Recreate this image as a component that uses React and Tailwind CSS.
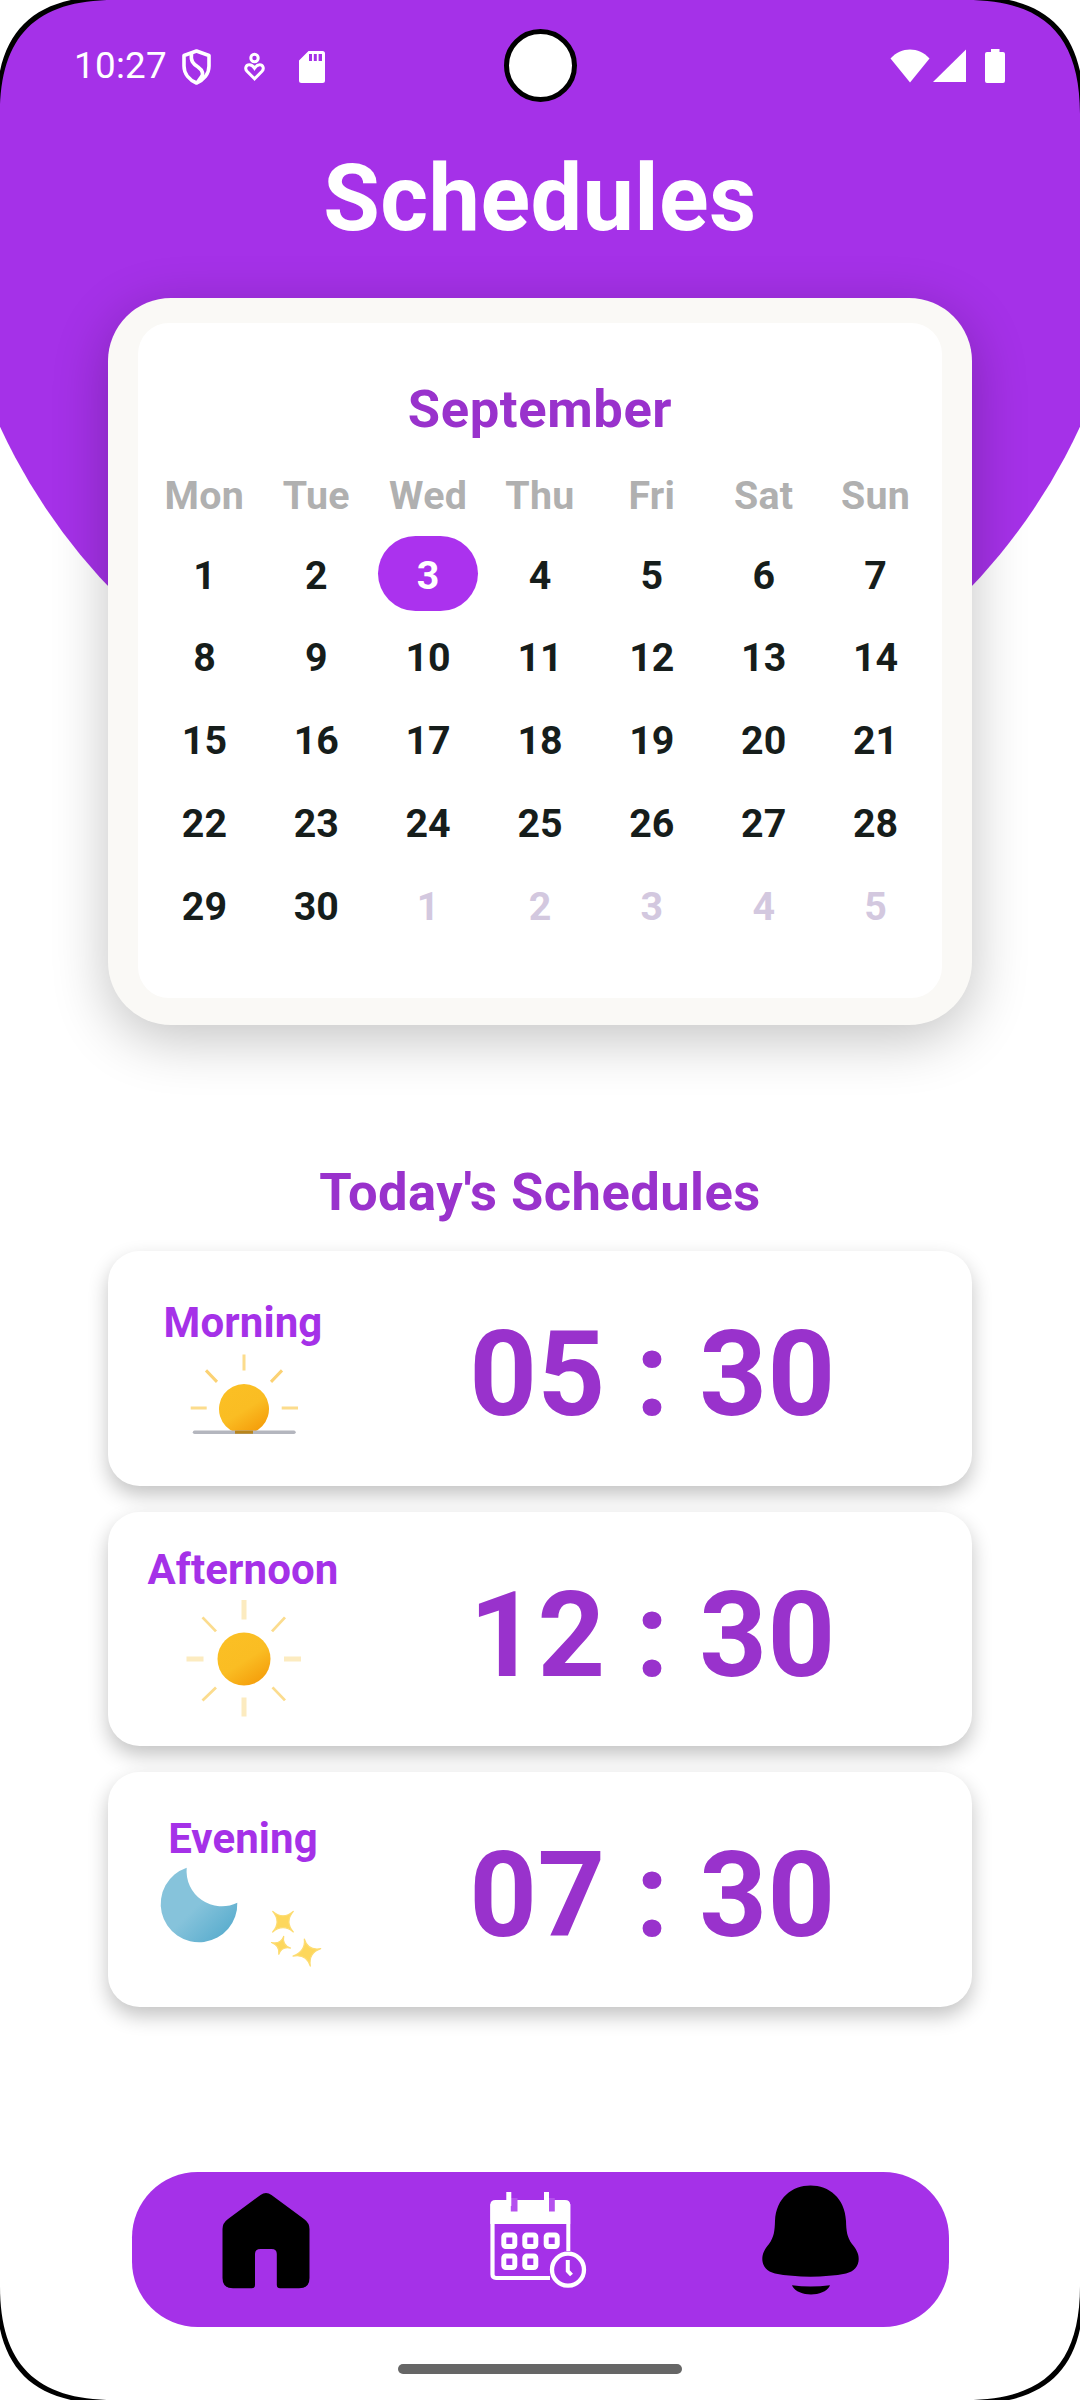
const WEEKDAYS = ["Mon", "Tue", "Wed", "Thu", "Fri", "Sat", "Sun"];
const DAYS = Array.from({ length: 35 }, (_, i) => ({
  label: i < 30 ? i + 1 : i - 29,
  outside: i >= 30,
  selected: i === 2,
}));

function StatusBar() {
  return (
    <div className="relative flex h-[132px] items-center text-white">
      <span className="ml-[74px] w-[108px] pt-[1px] text-[36.75px] leading-none tracking-[0.3px]">10:27</span>
      <svg className="mt-[2px]" width="29" height="36" viewBox="0 0 29 36" fill="none" stroke="#fff" strokeWidth="3.6" strokeLinejoin="round">
        <path d="M14.5 2 L27 6.5 V17 C27 25 21.5 31 14.5 34 C7.500 31 2 25 2 17 V6.500 Z" />
        <path d="M9.500 4.500 C8.500 12 11 15 16 18 C21 21.500 22 25 19.500 30" />
        <path d="M21 26 L16 33" strokeWidth="4" />
      </svg>
      <svg className="ml-[33px] mt-[2px]" width="21" height="30" viewBox="0 0 21 30" fill="none" stroke="#fff" strokeWidth="3">
        <circle cx="10.500" cy="6" r="3.700" />
        <path d="M10.500 26.800 L3 19.300 C0.500 16.500 2 12.800 5.300 12.800 C7.500 12.800 9 14 10.500 16.300 C12 14 13.500 12.800 15.700 12.800 C19 12.800 20.500 16.500 18 19.300 Z" />
      </svg>
      <svg className="ml-[34px] mt-[2px]" width="26" height="32" viewBox="0 0 26 32">
        <path fill="#fff" fillRule="evenodd" d="M9.500 0 H23.500 Q26 0 26 2.500 V29.500 Q26 32 23.500 32 H2.500 Q0 32 0 29.500 V9.500 Z M10 3 V10 H13 V3 Z M14.800 3 V10 H17.800 V3 Z M19.600 3 V10 H23 V3 Z" />
      </svg>
      <div className="ml-auto mr-[75px] flex items-center">
        <svg width="40" height="34" viewBox="0 0 40 34">
          <path fill="#fff" d="M20 33.500 L0.500 9.500 C11 -2.500 29 -2.500 39.500 9.500 Z" />
        </svg>
        <svg className="ml-[3px]" width="33" height="34" viewBox="0 0 33 34">
          <path fill="#fff" d="M33 0.500 V33 H0 Z" />
        </svg>
        <svg className="ml-[19px]" width="20" height="34" viewBox="0 0 20 34">
          <path fill="#fff" d="M6 0 H14.500 V3 H18 Q20 3 20 5 V32 Q20 34 18 34 H2 Q0 34 0 32 V5 Q0 3 2 3 H6 Z" />
        </svg>
      </div>
    </div>
  );
}

function Calendar() {
  return (
    <section className="relative mx-[108px] mt-[33px] h-[727px] rounded-[63px] bg-[#faf9f6] px-[30px] pt-[25px] pb-[27px] shadow-[0_14px_56px_rgba(0,0,0,0.24)]">
      <div className="h-full rounded-[31px] bg-white px-[10.500px] pt-[55px]">
        <h2 className="text-center text-[52.5px] leading-[62px] font-bold tracking-[0.6px] text-[#9932cc]">September</h2>
        <div className="mt-[32.5px] grid grid-cols-7 text-center text-[39.375px] leading-[46px] font-bold tracking-[0.3px] text-[#b0b0b0]">
          {WEEKDAYS.map((d) => (
            <span key={d}>{d}</span>
          ))}
        </div>
        <div className="mt-[13.5px] grid auto-rows-[82.75px] grid-cols-7 items-center justify-items-center text-[39.375px] font-bold">
          {DAYS.map((d, i) => (
            <span
              key={i}
              className={
                "flex h-[75px] w-[100px] items-center justify-center rounded-full pt-[4px] leading-none " +
                (d.selected ? "bg-[#ab32ee] text-white" : d.outside ? "text-[#d3c8df]" : "text-[#161d1b]")
              }
            >
              {d.label}
            </span>
          ))}
        </div>
      </div>
    </section>
  );
}

function SunGradient({ id }) {
  return (
    <linearGradient id={id} x1="0.250" y1="0.100" x2="0.800" y2="0.950">
      <stop offset="0" stopColor="#fbbf24" />
      <stop offset="0.500" stopColor="#fabd23" />
      <stop offset="1" stopColor="#f59e0b" />
    </linearGradient>
  );
}

function Sunrise() {
  return (
    <svg className="-mt-[1px]" width="140" height="96" viewBox="0 0 140 96">
      <defs>
        <SunGradient id="sunrise" />
      </defs>
      <path fill="url(#sunrise)" d="M62.500 85.500 A25 25 0 1 1 79.500 85.500 Z" />
      <path d="M71 7.400 V23.400 M17.700 60.900 H33.700 M108.700 60.900 H125" stroke="#fcdc8c" strokeWidth="3" />
      <path d="M33 23.400 L44 34.900 M109 23.400 L98 34.900" stroke="#fbd274" strokeWidth="3" />
      <path d="M21.500 85.200 H121" stroke="#b4b6be" strokeWidth="3.400" strokeLinecap="round" />
      <path d="M62 85.200 H80" stroke="#b8851c" strokeWidth="3" />
    </svg>
  );
}

function Sun() {
  return (
    <svg className="-mt-[1px]" width="140" height="128" viewBox="0 0 140 128">
      <defs>
        <SunGradient id="midday" />
      </defs>
      <circle cx="71" cy="65" r="26.500" fill="url(#midday)" />
      <path d="M71 5.900 V25.400 M71 103.400 V122.400 M13.500 65 H30.500 M111 65 H128" stroke="#fcebc0" strokeWidth="5" />
      <path d="M29.500 23.400 L43 37.400 M112 23.400 L99 37.400 M43 93.400 L29.500 106.400 M99.500 93.400 L112 106.400" stroke="#fbdc8e" strokeWidth="2.800" />
    </svg>
  );
}

/* Four-pointed star: tips joined by curves that bend in towards the centre. */
function Star({ cx, cy, tips }) {
  const d = tips
    .map(([x, y], i) => {
      const [nx, ny] = tips[(i + 1) % tips.length];
      const qx = cx + ((x + nx) / 2 - cx) * 0.15;
      const qy = cy + ((y + ny) / 2 - cy) * 0.15;
      return `${i === 0 ? `M${x} ${y}` : ""} Q${qx} ${qy} ${nx} ${ny}`;
    })
    .join(" ");
  return <path d={`${d} Z`} fill="#fdd75c" stroke="#fddc72" strokeWidth="1.200" strokeLinejoin="round" />;
}

function Moon() {
  return (
    <svg className="-mt-[1.5px]" width="200" height="112" viewBox="0 0 200 112">
      <defs>
        <linearGradient id="moon" x1="0.200" y1="0.200" x2="0.850" y2="0.850">
          <stop offset="0" stopColor="#86c3db" />
          <stop offset="0.450" stopColor="#86c3db" />
          <stop offset="1" stopColor="#5eafcf" />
        </linearGradient>
      </defs>
      <path fill="url(#moon)" d="M43.700 4.700 A35.300 35.300 0 0 0 94.300 39.700 A38.300 38.300 0 1 1 43.700 4.700 Z" />
      <Star cx={140} cy={58.7} tips={[[129.7, 48.4], [150.3, 48.4], [150.3, 69], [129.7, 69]]} />
      <Star cx={138} cy={82.4} tips={[[140.7, 73.4], [147.5, 85.1], [135.8, 91.3], [128.5, 79.5]]} />
      <Star cx={164} cy={89.1} tips={[[161.3, 76], [177.7, 85.7], [167.3, 103.1], [150, 93.1]]} />
    </svg>
  );
}

const SLOTS = [
  { name: "Morning", time: "05 : 30", Icon: Sunrise, pad: "pt-[47px]" },
  { name: "Afternoon", time: "12 : 30", Icon: Sun, pad: "pt-[33px]" },
  { name: "Evening", time: "07 : 30", Icon: Moon, pad: "pt-[42px]" },
];

function ScheduleCard({ name, time, Icon, pad }) {
  return (
    <article className="relative flex h-[234.5px] rounded-[31.500px] bg-white shadow-[0_9px_20px_rgba(0,0,0,0.24)]">
      <div className={"flex w-[270px] flex-col items-center " + pad}>
        <h3 className="text-[42px] leading-[50px] font-bold tracking-[0.1px] text-[#a531e8]">{name}</h3>
        <Icon />
      </div>
      <p className="flex-1 pt-[54px] pr-[45px] text-center text-[118.125px] leading-[140px] font-bold tracking-[0.5px] text-[#9932cc]">{time}</p>
    </article>
  );
}

function HomeIcon() {
  return (
    <svg width="112" height="112" viewBox="0 0 112 112">
      <path d="M49.500 11 Q55 7 60.500 11 L93 35 Q98.500 39 98.500 45 V94 Q98.500 104.300 88 104.300 H69 Q65.800 104.300 65.800 101 V70 Q65.800 65 60.500 65 H49.500 Q44 65 44 70 V101 Q44 104.300 41 104.300 H22 Q11.500 104.300 11.500 94 V45 Q11.500 39 17 35 Z" />
    </svg>
  );
}

function CalendarClockIcon() {
  return (
    <svg width="112" height="112" viewBox="0 0 112 112" fill="none" stroke="#fff">
      <path d="M67 94 H13 Q9.500 94 9.500 90.500 V20" strokeWidth="4.200" />
      <path d="M85.300 20 V67" strokeWidth="4" />
      <path d="M7.300 40 V21 Q7.300 16 12.500 16 H82 Q87.200 16 87.200 21 V40 Z" fill="#fff" stroke="none" />
      <path d="M27.800 14 H34.500 V27.500 H27.800 Z M66 14 H71.800 V27.500 H66 Z" fill="#b550ee" stroke="none" />
      <path d="M25.800 8 V22 M63.500 8 V22" strokeWidth="5" />
      <g strokeWidth="5">
        <rect x="20.800" y="51" width="11" height="11.500" rx="2" />
        <rect x="41.800" y="51" width="11" height="11.500" rx="2" />
        <rect x="63.200" y="51" width="11" height="11.500" rx="2" />
        <rect x="20.800" y="72" width="11" height="11.500" rx="2" />
        <rect x="41.800" y="72" width="11" height="11.500" rx="2" />
      </g>
      <circle cx="85" cy="85.700" r="16" strokeWidth="4.300" />
      <path d="M84.800 76 V87 L88.500 91" strokeWidth="4" />
    </svg>
  );
}

function BellIcon() {
  return (
    <svg width="112" height="112" viewBox="0 0 112 112">
      <path d="M55.500 1.500 C74 1.500 90 14 91 37 C91.300 47 92 53 97 60 C101 65 103.700 69 103.700 75 C103.700 82 99 87.500 91 89.500 C70 93.700 41 93.700 20 89.500 C12 87.500 7.300 82 7.300 75 C7.300 69 10 65 14 60 C19 53 19.700 47 20 37 C21 14 37 1.500 55.500 1.500 Z" />
      <path d="M37 101.300 C49 103 62 103 75 101.300 C70 113.500 42 113.500 37 101.300 Z" />
    </svg>
  );
}

/* Rounded display corner with a thin black bezel, drawn for the top-left and mirrored by the caller. */
function Corner({ className }) {
  return (
    <svg className={"pointer-events-none absolute " + className} width="116" height="116" viewBox="0 0 116 116">
      <path d="M0 114 C0 36 36 0 114 0 H0 Z" fill="#000" />
      <path d="M-3.800 110.200 C-3.800 32.200 32.200 -3.800 110.200 -3.800 H-4 Z" fill="#fff" />
    </svg>
  );
}

export default function App() {
  return (
    <main className="relative flex h-[2400px] w-[1080px] flex-col overflow-hidden bg-white font-['Roboto',sans-serif]">
      <div className="absolute -top-[418px] left-1/2 h-[1190px] w-[1190px] -translate-x-1/2 rounded-full bg-[#a531e8]" />
      <StatusBar />
      <h1 className="relative text-center text-[91.875px] leading-[133px] font-bold tracking-[0.4px] text-white">Schedules</h1>
      <Calendar />
      <h2 className="relative mt-[136px] text-center text-[52.5px] leading-[62px] font-bold tracking-[0.45px] text-[#9932cc]">Today's Schedules</h2>
      <div className="mx-[108px] mt-[28px] flex flex-col gap-[26px]">
        {SLOTS.map((s) => (
          <ScheduleCard key={s.name} {...s} />
        ))}
      </div>
      <nav className="mx-auto mt-[165px] grid h-[155px] w-[817px] grid-cols-3 justify-items-center rounded-[65.6px] bg-[#a531e8] pt-[12px] pr-[1.5px]">
        <HomeIcon />
        <CalendarClockIcon />
        <BellIcon />
      </nav>
      <div className="mx-auto mt-[37px] h-[10px] w-[284px] rounded-[5px] bg-[#666]" />

      <div className="absolute top-[29px] left-[503.5px] h-[73px] w-[73px] rounded-full border-[5px] border-black bg-white" />
      <Corner className="top-0 left-0" />
      <Corner className="top-0 right-0 -scale-x-100" />
      <Corner className="bottom-0 left-0 -scale-y-100" />
      <Corner className="right-0 bottom-0 -scale-100" />
    </main>
  );
}
